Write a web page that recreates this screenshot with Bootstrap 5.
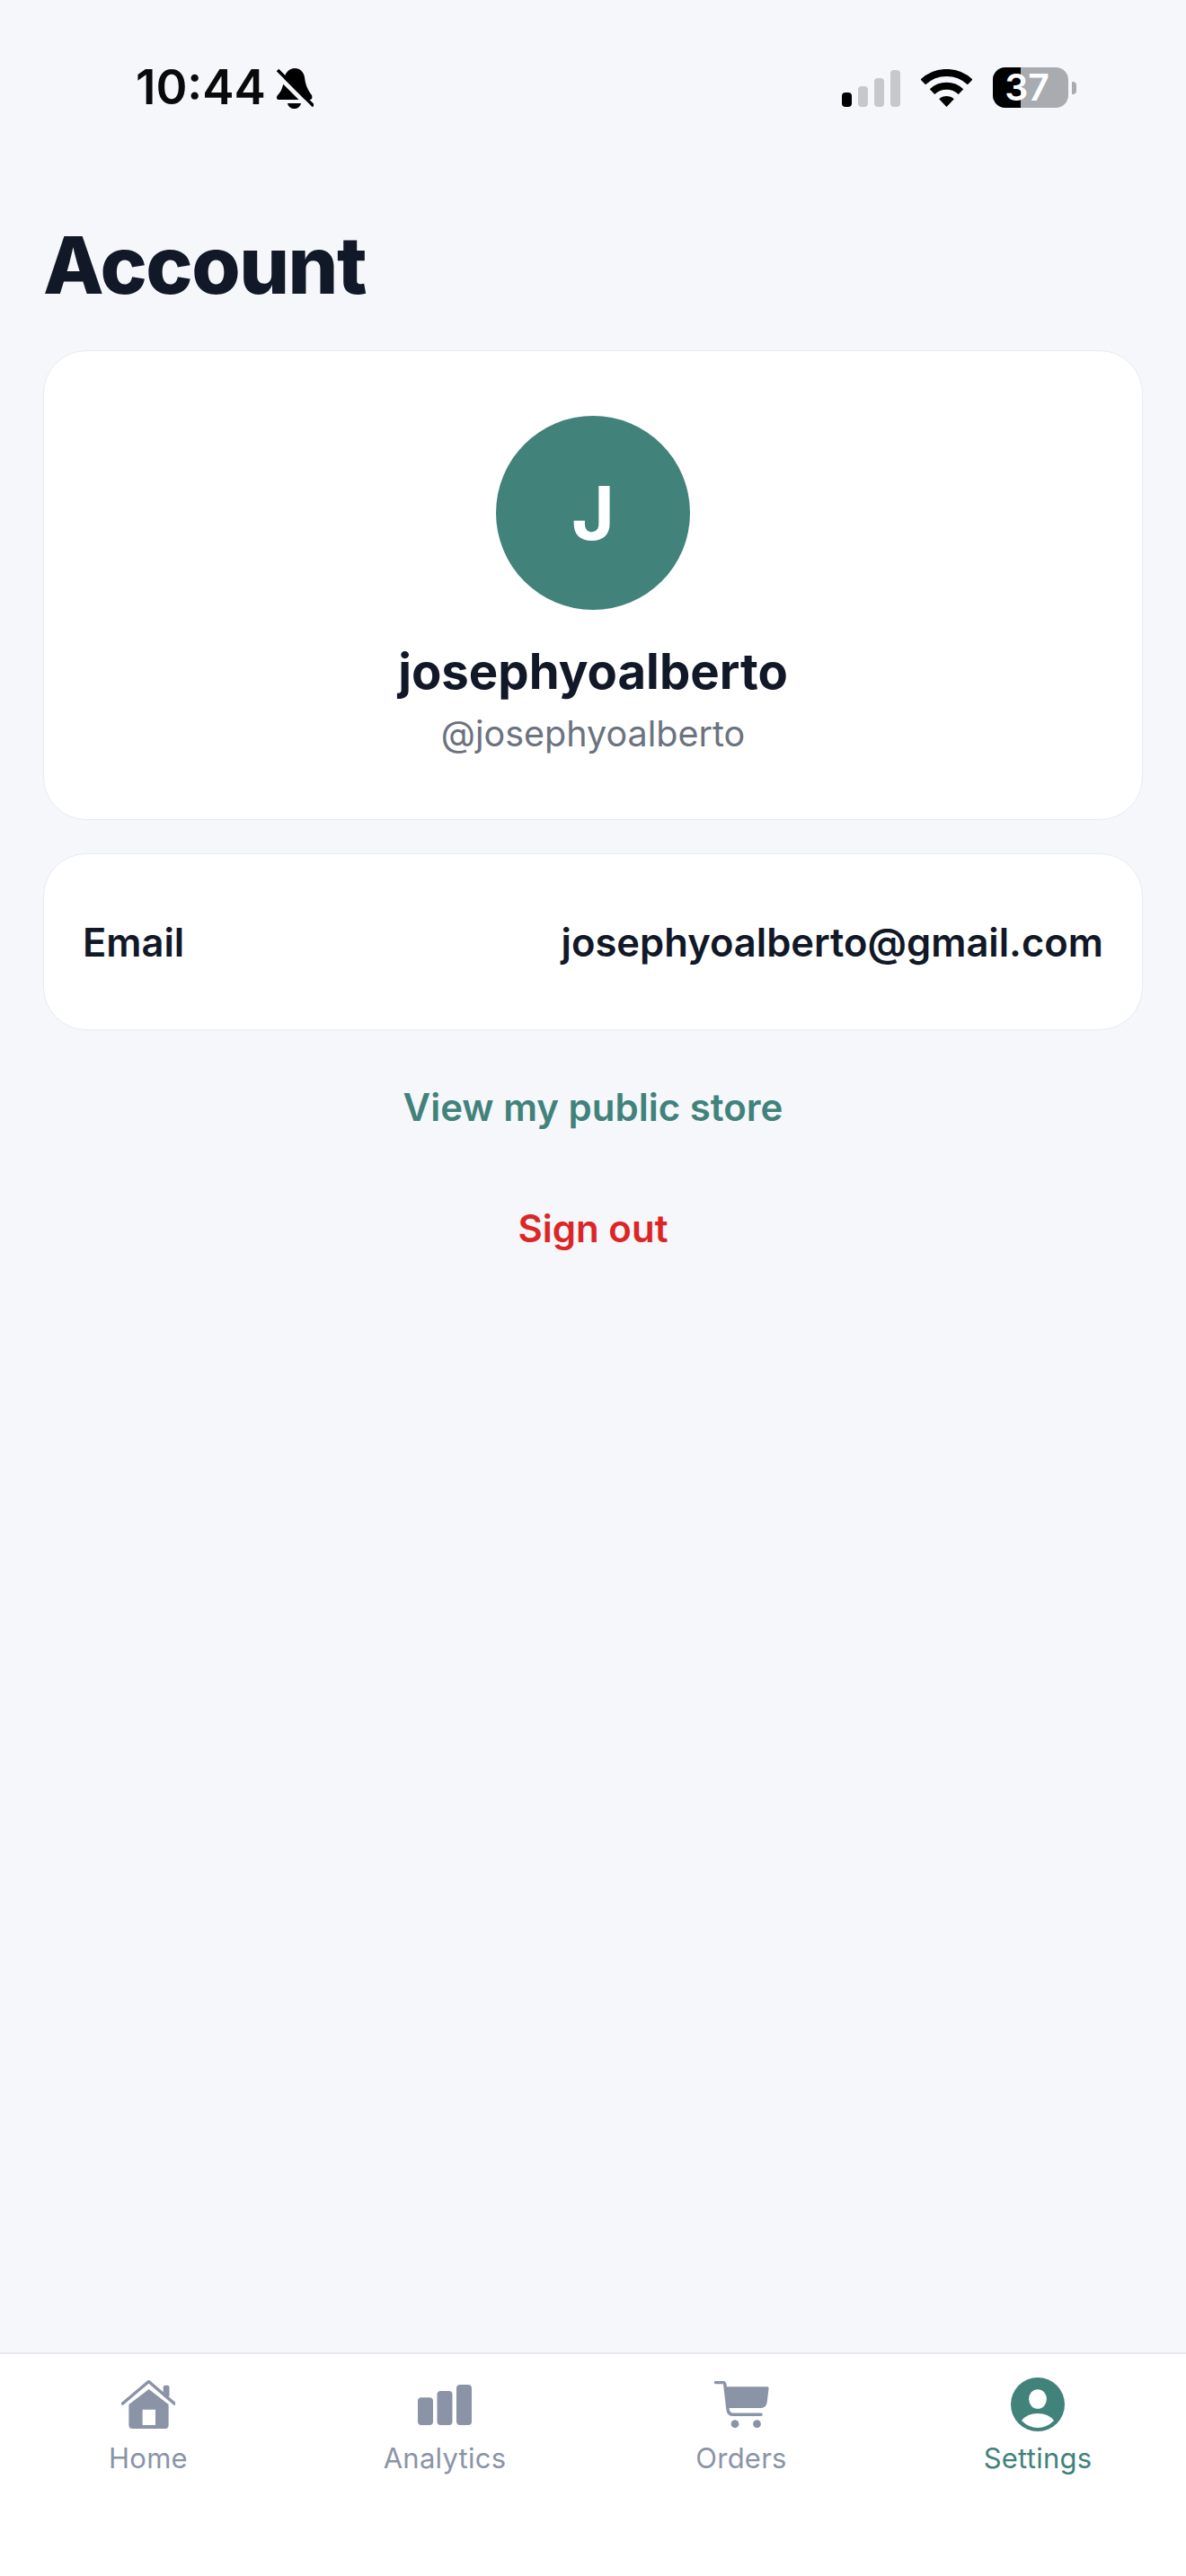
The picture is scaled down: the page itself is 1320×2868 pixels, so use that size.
<!DOCTYPE html>
<html lang="en">
<head>
  <meta charset="UTF-8">
  <meta name="viewport" content="width=device-width, initial-scale=1">
  <title>Account</title>
  <link href="https://cdn.jsdelivr.net/npm/bootstrap@5.3.0/dist/css/bootstrap.min.css" rel="stylesheet">
  <style>
    body { background: #f5f7fb; font-family: Inter, "Liberation Sans", sans-serif; color: #111827; }
    .app-page { min-height: 2868px; }
    .status-strip { padding: 74px 122px 0 151px; height: 121px; }
    .status-time { font-size: 53px; line-height: 47px; font-weight: 600; color: #0a0a0a; }
    .status-gap { gap: 11px; }
    .status-icons { gap: 23px; }
    .signal-wrap { padding-top: 2px; }
    .battery-wrap { width: 93px; height: 45px; }
    .battery-body { width: 85px; height: 45px; border-radius: 14px; background: #a8abb0; }
    .battery-fill { width: 31px; background: #000; border-radius: 14px 0 0 14px; }
    .battery-num { font-size: 41px; font-weight: 600; line-height: 45px; color: #fff; inset: 0 8px 0 0; }
    .battery-tip { width: 5px; height: 14px; background: #a8abb0; border-radius: 0 4px 4px 0; }
    .page-main { padding: 130px 48px 0; }
    .page-title { font-size: 88px; line-height: 88px; font-weight: 800; letter-spacing: -1.5px; margin-bottom: 51px; color: #111827; }
    .sheet { border: 1px solid #e8eaf0; border-radius: 48px; background: #fff; }
    .profile-sheet { height: 523px; padding-top: 72px; margin-bottom: 37px; }
    .avatar-disc { width: 216px; height: 216px; background: #41827b; color: #fff; font-size: 82px; font-weight: 700; }
    .profile-name { font-size: 54.5px; line-height: 70px; font-weight: 700; margin-top: 33px; }
    .profile-handle { font-size: 39.5px; line-height: 58px; color: #6b7280; margin-top: 6px; }
    .email-sheet { height: 197px; padding: 2px 43px 0; font-size: 43.5px; font-weight: 600; }
    .page-link-btn { display: block; text-align: center; font-size: 42px; line-height: 56px; text-decoration: none; font-weight: 600; }
    .link-store { color: #41827b; margin-top: 58px; }
    .link-out { color: #dc2626; margin-top: 79px; }
    .tab-strip { height: 249px; background: #fff; border-top: 2px solid #e8eaf0; }
    .tab-cell { padding-top: 26px; color: #8a94a6; font-size: 31px; line-height: 40px; letter-spacing: .25px; text-decoration: none; }
    .tab-cell.is-on { color: #41827b; }
    .tab-icon { height: 60px; margin-bottom: 10px; }
  </style>
</head>
<body>
  <div class="app-page d-flex flex-column">
    <div class="status-strip d-flex justify-content-between">
      <div class="d-flex align-items-center status-gap">
        <span class="status-time">10:44</span>
        <svg width="42" height="46" viewBox="0 0 42 46">
          <path d="M21 1C27 1 31 5 32 11C33 20 36 26 40 31C41 34 40 36 37 36H4C1 36 0 34 2 31C6 27 8 22 9 14C10 6 15 1 21 1Z" fill="#000"/>
          <path d="M13 40H28C27 44 24 46 20.5 46C17 46 14 44 13 40Z" fill="#000"/>
          <path d="M-2 5L38 45" stroke="#f5f7fb" stroke-width="5"/>
          <path d="M2 3L42 43" stroke="#000" stroke-width="3.5"/>
        </svg>
      </div>
      <div class="d-flex align-items-center status-icons">
        <svg class="signal-wrap" width="65" height="43" viewBox="0 0 65 41">
          <rect x="0" y="25" width="11" height="16" rx="4" fill="#000"/>
          <rect x="18" y="18" width="11" height="23" rx="4" fill="#c6c8cc"/>
          <rect x="36" y="9" width="11" height="32" rx="4" fill="#c6c8cc"/>
          <rect x="54" y="0" width="11" height="41" rx="4" fill="#c6c8cc"/>
        </svg>
        <svg width="57" height="42" viewBox="0 0 57 42" fill="none">
          <path d="M2.3 14.4A38 38 0 0 1 54.7 14.4" stroke="#000" stroke-width="8"/>
          <path d="M12.5 25.1A23.3 23.3 0 0 1 44.5 25.1" stroke="#000" stroke-width="8"/>
          <path d="M28.5 42L20.2 33.3A12 12 0 0 1 36.8 33.3Z" fill="#000"/>
        </svg>
        <div class="battery-wrap d-flex align-items-center">
          <div class="battery-body position-relative d-flex">
            <div class="battery-fill"></div>
            <span class="battery-num position-absolute text-center">37</span>
          </div>
          <div class="battery-tip ms-1"></div>
        </div>
      </div>
    </div>

    <main class="page-main flex-grow-1">
      <h1 class="page-title">Account</h1>
      <div class="sheet profile-sheet d-flex flex-column align-items-center">
        <div class="avatar-disc rounded-circle d-flex align-items-center justify-content-center">J</div>
        <div class="profile-name">josephyoalberto</div>
        <div class="profile-handle">@josephyoalberto</div>
      </div>
      <div class="sheet email-sheet d-flex align-items-center justify-content-between">
        <span>Email</span>
        <span>josephyoalberto@gmail.com</span>
      </div>
      <a href="#" class="page-link-btn link-store">View my public store</a>
      <a href="#" class="page-link-btn link-out">Sign out</a>
    </main>

    <nav class="tab-strip d-flex">
      <a href="#" class="tab-cell flex-fill w-25 d-flex flex-column align-items-center">
        <span class="tab-icon d-flex align-items-center">
          <svg width="60" height="54" viewBox="0 0 60 54" fill="#8a94a6">
            <path d="M1.5 26L30.5 1.5L59 26" fill="none" stroke="#8a94a6" stroke-width="3.5" stroke-linecap="round" stroke-linejoin="round"/>
            <rect x="46.7" y="5.7" width="6.8" height="13" rx="2"/>
            <path fill-rule="evenodd" d="M30.7 10L52.6 27V50Q52.6 54 48.6 54H12.4Q8.4 54 8.4 50V27ZM23.6 32.7V50H38V32.7Z"/>
          </svg>
        </span>
        Home
      </a>
      <a href="#" class="tab-cell flex-fill w-25 d-flex flex-column align-items-center">
        <span class="tab-icon d-flex align-items-center">
          <svg width="60" height="45" viewBox="0 0 60 45" fill="#8a94a6">
            <rect x="0" y="14.3" width="17" height="30.7" rx="4"/>
            <rect x="21.5" y="7" width="17" height="38" rx="4"/>
            <rect x="43" y="0" width="17" height="45" rx="4"/>
          </svg>
        </span>
        Analytics
      </a>
      <a href="#" class="tab-cell flex-fill w-25 d-flex flex-column align-items-center">
        <span class="tab-icon d-flex align-items-center">
          <svg width="61" height="52" viewBox="0 0 61 52" fill="#8a94a6">
            <path d="M1.5 1.5H9.5Q11.5 1.5 11.8 3.5L15 31Q15.5 37.3 21 37.3H52" fill="none" stroke="#8a94a6" stroke-width="3.5" stroke-linecap="round"/>
            <path d="M12 6.3H59Q60.8 6.3 60.6 8L58.8 23Q58 30 52 30H15Z"/>
            <circle cx="23" cy="47.7" r="4.4"/>
            <circle cx="47.5" cy="47.7" r="4.4"/>
          </svg>
        </span>
        Orders
      </a>
      <a href="#" class="tab-cell is-on flex-fill w-25 d-flex flex-column align-items-center">
        <span class="tab-icon d-flex align-items-center">
          <svg width="60" height="60" viewBox="0 0 60 60">
            <circle cx="30" cy="30" r="30" fill="#41827b"/>
            <ellipse cx="30" cy="24" rx="9.9" ry="10.8" fill="#fff"/>
            <path d="M12 48Q18 40 30 40Q42 40 48 48Q40 56 30 56Q20 56 12 48Z" fill="#fff"/>
          </svg>
        </span>
        Settings
      </a>
    </nav>
  </div>
  <script src="https://cdn.jsdelivr.net/npm/bootstrap@5.3.0/dist/js/bootstrap.bundle.min.js"></script>
</body>
</html>
